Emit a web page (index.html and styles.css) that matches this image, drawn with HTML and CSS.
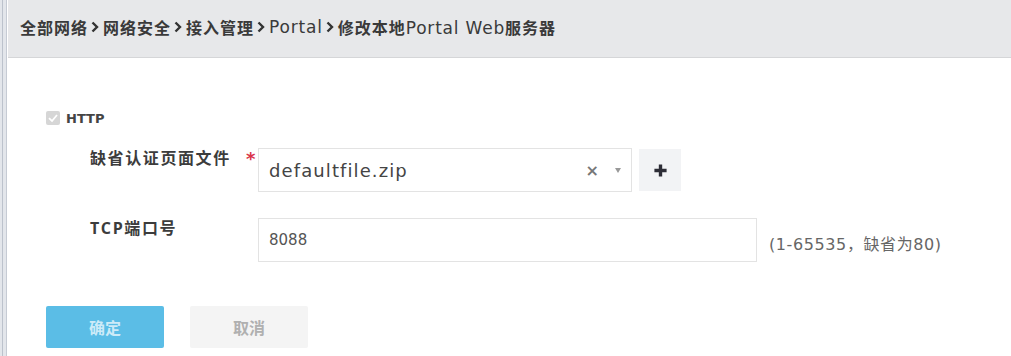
FILE: index.html
```html
<!DOCTYPE html>
<html lang="zh-CN">
<head>
  <meta charset="UTF-8">
  <title>修改本地Portal Web服务器</title>
  <link rel="stylesheet" href="styles.css">
</head>
<body>
  <div class="page">
    <div class="crumbs">
      <span>全部网络</span>
      <svg class="sep" viewBox="0 0 8 12"><path d="M1.5 1.5 L6 6 L1.5 10.5" /></svg>
      <span>网络安全</span>
      <svg class="sep" viewBox="0 0 8 12"><path d="M1.5 1.5 L6 6 L1.5 10.5" /></svg>
      <span>接入管理</span>
      <svg class="sep" viewBox="0 0 8 12"><path d="M1.5 1.5 L6 6 L1.5 10.5" /></svg>
      <span class="latin">Portal</span>
      <svg class="sep" viewBox="0 0 8 12"><path d="M1.5 1.5 L6 6 L1.5 10.5" /></svg>
      <span>修改本地<span class="latin">Portal Web</span>服务器</span>
    </div>

    <div class="form">
      <label class="check">
        <span class="box">
          <svg viewBox="0 0 14 14"><path d="M3 7.2 L6 10 L11 4" /></svg>
        </span>
        HTTP
      </label>

      <div class="row">
        <div class="label">缺省认证页面文件</div>
        <span class="star">*</span>
        <div class="select">
          <span class="value">defaultfile.zip</span>
          <span class="clear">&times;</span>
          <span class="caret"></span>
        </div>
        <button class="add">
          <svg viewBox="0 0 16 16"><path d="M8 1.5 V14.5 M1.5 8 H14.5" /></svg>
        </button>
      </div>

      <div class="row">
        <div class="label">TCP端口号</div>
        <span class="star blank"></span>
        <input class="text" type="text" value="8088">
        <span class="hint">(1-65535，缺省为80)</span>
      </div>

      <div class="actions">
        <button class="btn primary">确定</button>
        <button class="btn">取消</button>
      </div>
    </div>
  </div>
</body>
</html>
```

FILE: styles.css
```css
* {
  box-sizing: border-box;
}

body {
  margin: 0;
  font-family: "DejaVu Sans", "Noto Sans CJK SC", sans-serif;
  color: #333;
  background: #fff;
}

.page {
  min-height: 100vh;
  padding-left: 8px;
  background: linear-gradient(to right, #e3e6eb 0 2px, #bcc2cc 2px 3px, #e3e6eb 3px 6px, #c6cbd4 6px 7px, #fff 7px);
}

.crumbs {
  height: 58px;
  padding: 0 0 3px 12px;
  display: flex;
  align-items: center;
  background: #e7e8ea;
  border-bottom: 1px solid #d5d6d8;
  font-family: "Noto Sans CJK SC", sans-serif;
  font-size: 16px;
  font-weight: bold;
  letter-spacing: 1px;
  color: #3a3a3a;
}

.crumbs .latin {
  font-family: "DejaVu Sans", sans-serif;
  font-weight: normal;
  font-size: 17px;
  letter-spacing: 0.8px;
}

.sep {
  width: 8px;
  height: 12px;
  margin: 0 4px 0 3px;
}

.sep path {
  fill: none;
  stroke: #333;
  stroke-width: 2.4;
}

.form {
  padding: 52px 0 0 38px;
}

.check {
  display: flex;
  align-items: center;
  gap: 6px;
  height: 16px;
  font-size: 13px;
  font-weight: bold;
  color: #444;
}

.box {
  width: 14px;
  height: 14px;
  border-radius: 2px;
  background: #d6d6d6;
  display: flex;
}

.box path {
  fill: none;
  stroke: #fff;
  stroke-width: 1.8;
}

.row {
  display: flex;
  align-items: flex-start;
  margin: 22px 0 0 44px;
}

.row + .row {
  margin-top: 26px;
}

.label {
  width: 156px;
  font-family: "Open Sans", "Noto Sans CJK SC", sans-serif;
  font-size: 16px;
  font-weight: bold;
  letter-spacing: 1.6px;
  color: #3c3c3c;
  line-height: 20px;
}

.star {
  width: 12px;
  color: #d9344b;
  font-size: 18px;
  line-height: 22px;
  font-weight: bold;
}

.select {
  width: 374px;
  height: 44px;
  border: 1px solid #e3e3e3;
  display: flex;
  align-items: center;
  padding: 0 10px;
  font-size: 18px;
  letter-spacing: 1.1px;
  color: #444;
}

.select .value {
  flex: 1;
}

.select .clear {
  color: #777;
  font-size: 16px;
  font-weight: bold;
  margin-right: 15px;
}

.caret {
  width: 0;
  height: 0;
  border-left: 3.5px solid transparent;
  border-right: 3.5px solid transparent;
  border-top: 5px solid #999;
}

.add {
  width: 42px;
  height: 42px;
  margin: 1px 0 0 7px;
  border: none;
  background: #f2f3f5;
  display: flex;
  align-items: center;
  justify-content: center;
  padding: 0;
}

.add svg {
  width: 15px;
  height: 15px;
}

.add path {
  stroke: #2d2d36;
  stroke-width: 3.6;
}

.text {
  width: 499px;
  height: 44px;
  border: 1px solid #e3e3e3;
  padding: 0 10px;
  font-family: "DejaVu Sans", sans-serif;
  font-size: 15px;
  color: #555;
  outline: none;
}

.hint {
  margin: 13px 0 0 12px;
  font-size: 16px;
  letter-spacing: 0.6px;
  color: #666;
}

.actions {
  display: flex;
  gap: 26px;
  margin-top: 44px;
}

.btn {
  width: 118px;
  height: 42px;
  border: none;
  border-radius: 2px;
  background: #f4f4f4;
  color: #b0b0b0;
  font-family: "Noto Sans CJK SC", sans-serif;
  font-size: 16px;
  font-weight: bold;
}

.btn.primary {
  background: #5bbde6;
  color: #cdebf8;
}
```
